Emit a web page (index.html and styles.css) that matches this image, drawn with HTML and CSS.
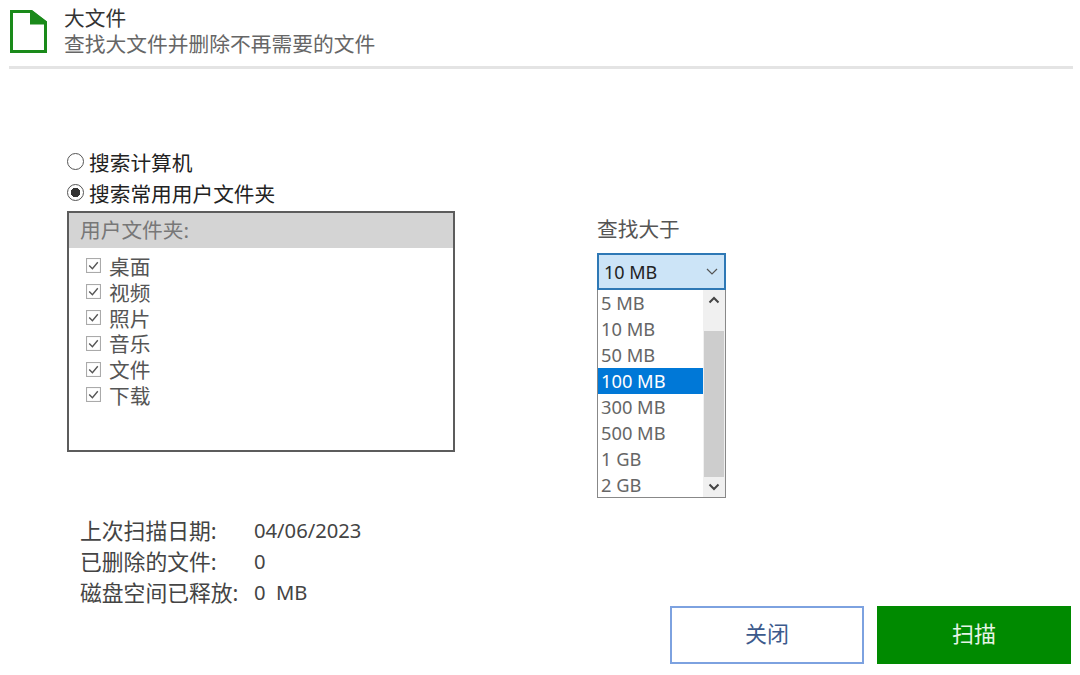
FILE: index.html
```html
<!DOCTYPE html>
<html lang="zh-CN">
<head>
<meta charset="utf-8">
<title>大文件</title>
<link rel="stylesheet" href="styles.css">
</head>
<body>
<div class="page">
  <header class="header">
    <svg class="file-icon" width="37" height="43" viewBox="0 0 37 43" aria-hidden="true">
      <path d="M1.500 1.500H21L35.500 12.500V41.500H1.500Z" fill="#fff" stroke="#1a8a1a" stroke-width="3"/>
      <path d="M20 0H22L37 11.500V14.500H20Z" fill="#1a8a1a"/>
    </svg>
    <div class="header-text">
      <div class="title">大文件</div>
      <div class="subtitle">查找大文件并删除不再需要的文件</div>
    </div>
  </header>
  <div class="divider"></div>

  <main class="main">
    <section class="left">
      <label class="radio-row"><span class="radio"></span>搜索计算机</label>
      <label class="radio-row"><span class="radio on"></span>搜索常用用户文件夹</label>
      <div class="folders">
        <div class="folders-head">用户文件夹:</div>
        <ul class="folder-list">
          <li><svg class="check" viewBox="0 0 14 14"><rect x=".5" y=".5" width="13" height="13" fill="#fff" stroke="#aaa"/><path d="M3 7l3 3 5-6" fill="none" stroke="#555" stroke-width="1.3"/></svg>桌面</li>
          <li><svg class="check" viewBox="0 0 14 14"><rect x=".5" y=".5" width="13" height="13" fill="#fff" stroke="#aaa"/><path d="M3 7l3 3 5-6" fill="none" stroke="#555" stroke-width="1.3"/></svg>视频</li>
          <li><svg class="check" viewBox="0 0 14 14"><rect x=".5" y=".5" width="13" height="13" fill="#fff" stroke="#aaa"/><path d="M3 7l3 3 5-6" fill="none" stroke="#555" stroke-width="1.3"/></svg>照片</li>
          <li><svg class="check" viewBox="0 0 14 14"><rect x=".5" y=".5" width="13" height="13" fill="#fff" stroke="#aaa"/><path d="M3 7l3 3 5-6" fill="none" stroke="#555" stroke-width="1.3"/></svg>音乐</li>
          <li><svg class="check" viewBox="0 0 14 14"><rect x=".5" y=".5" width="13" height="13" fill="#fff" stroke="#aaa"/><path d="M3 7l3 3 5-6" fill="none" stroke="#555" stroke-width="1.3"/></svg>文件</li>
          <li><svg class="check" viewBox="0 0 14 14"><rect x=".5" y=".5" width="13" height="13" fill="#fff" stroke="#aaa"/><path d="M3 7l3 3 5-6" fill="none" stroke="#555" stroke-width="1.3"/></svg>下载</li>
        </ul>
      </div>
      <dl class="stats">
        <dt>上次扫描日期:</dt><dd>04/06/2023</dd>
        <dt>已删除的文件:</dt><dd>0</dd>
        <dt>磁盘空间已释放:</dt><dd>0&nbsp; MB</dd>
      </dl>
    </section>

    <section class="right">
      <div class="size-label">查找大于</div>
      <div class="combo">
        <span>10 MB</span>
        <svg class="combo-arrow" width="12" height="7" viewBox="0 0 12 7"><path d="M1 1l5 5 5-5" fill="none" stroke="#555" stroke-width="1.2"/></svg>
      </div>
      <div class="dropdown">
        <ul class="options">
          <li>5 MB</li>
          <li>10 MB</li>
          <li>50 MB</li>
          <li class="selected">100 MB</li>
          <li>300 MB</li>
          <li>500 MB</li>
          <li>1 GB</li>
          <li>2 GB</li>
        </ul>
        <div class="scrollbar">
          <svg class="scroll-arrow" width="12" height="8" viewBox="0 0 12 8"><path d="M1.500 6.500L6 2l4.500 4.500" fill="none" stroke="#444" stroke-width="2"/></svg>
          <div class="scroll-thumb"></div>
          <svg class="scroll-arrow" width="12" height="8" viewBox="0 0 12 8"><path d="M1.500 1.500L6 6l4.500-4.500" fill="none" stroke="#444" stroke-width="2"/></svg>
        </div>
      </div>
      <div class="actions">
        <button class="btn btn-close" type="button">关闭</button>
        <button class="btn btn-scan" type="button">扫描</button>
      </div>
    </section>
  </main>
</div>
</body>
</html>
```
FILE: styles.css
```css
* { box-sizing: border-box; }
html, body { margin: 0; padding: 0; background: #fff; }
body {
  width: 1080px;
  height: 675px;
  overflow: hidden;
  font-family: "Noto Sans", "Noto Sans CJK SC", sans-serif;
  font-size: 20.7px;
  color: #444;
}
.page { padding: 0 7px 0 9px; }

.header { display: flex; align-items: flex-start; height: 66px; padding: 10px 0 0 1px; }
.file-icon { flex: none; margin-right: 17px; }
.header-text { margin-top: -7px; }
.title { line-height: 31px; color: #333; }
.subtitle { line-height: 31px; color: #666; margin-top: -5px; font-size: 20.750px; }
.divider { height: 3px; background: #e4e4e4; }

.main { display: flex; align-items: flex-start; padding: 77px 0 0 58px; }
.left { width: 530px; flex: none; }
.radio-row { display: flex; align-items: center; height: 31px; color: #222; }
.radio {
  width: 17px; height: 17px; margin-right: 5px; border-radius: 50%;
  border: 1.500px solid #555; background: #fff; flex: none;
}
.radio.on { background: radial-gradient(circle, #333 0 4.500px, #fff 5px); }

.folders { width: 388px; height: 241px; margin-top: 3px; border: 2px solid #5c5c5c; }
.folders-head { height: 35px; padding-left: 11px; line-height: 35px; background: #d4d4d4; color: #777; }
.folder-list { list-style: none; margin: 0; padding: 5px 0 0 17px; }
.folder-list li { display: flex; align-items: center; height: 25.800px; color: #555; }
.check { width: 15px; height: 15px; margin-right: 8px; flex: none; }

.stats {
  display: grid; grid-template-columns: 174px auto; margin: 63px 0 0 13px;
  line-height: 31px; color: #444;
}
.stats dt, .stats dd { margin: 0; height: 31px; }
.stats dt { font-size: 21.800px; }
.stats dd { font-size: 20.200px; }

.right { flex: 1; display: flex; flex-direction: column; }
.size-label { height: 41px; margin-top: 66px; line-height: 34px; color: #555; }
.combo {
  display: flex; align-items: center; justify-content: space-between;
  width: 129px; height: 37px; padding: 0 6px 0 5px;
  background: #cce4f7; border: 2px solid #2e78b5; color: #222; font-size: 18px;
}
.combo-arrow { flex: none; }
.dropdown { display: flex; width: 129px; height: 208px; border: 1px solid #888; border-top: 0; background: #fff; font-size: 18.300px; }
.options { list-style: none; margin: 0; padding: 0; flex: 1; }
.options li { height: 26px; line-height: 26px; padding-left: 3px; color: #666; }
.options li.selected { background: #0078d7; color: #fff; }
.scrollbar { width: 22px; flex: none; display: flex; flex-direction: column; align-items: center; background: #f0f0f0; }
.scroll-arrow { flex: none; margin: 6px 0; }
.scroll-thumb { flex: 1; align-self: stretch; margin: 21px 1px 0; background: #cdcdcd; }

.actions { display: flex; gap: 13px; margin: 108px 0 0 73px; }
.btn { width: 194px; height: 58px; padding: 0 0 7px; font: inherit; font-size: 22px; cursor: pointer; }
.btn-close { background: #fff; border: 2px solid #7da2e0; color: #3c5a8c; }
.btn-scan { background: #008a00; border: 0; color: #e6f4e6; }
```
